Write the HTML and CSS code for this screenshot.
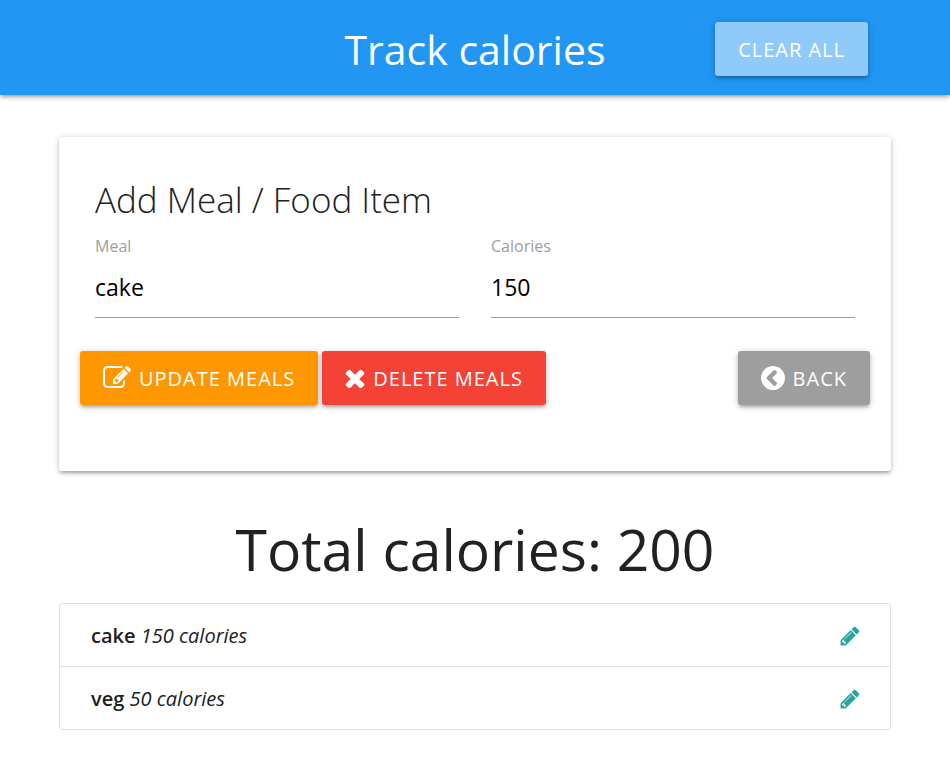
FILE: index.html
```html
<!DOCTYPE html>
<html lang="en">
<head>
<meta charset="utf-8">
<meta name="viewport" content="width=device-width, initial-scale=1">
<title>Track calories</title>
<link rel="stylesheet" href="styles.css">
</head>
<body>
<svg class="sprite" aria-hidden="true">
  <symbol id="pencil" viewBox="0 0 1792 1792"><path d="M491 1536l91-91-235-235-91 91v107h128v128h107zm523-928q0-22-22-22-10 0-17 7l-542 542q-7 7-7 17 0 22 22 22 10 0 17-7l542-542q7-7 7-17zm-54-192l416 416-832 832h-416v-416zm683 96q0 53-37 90l-166 166-416-416 166-165q36-38 90-38 53 0 91 38l235 234q37 39 37 91z"/></symbol>
  <symbol id="edit" viewBox="0 0 1792 1792"><path d="M888 1184l116-116-152-152-116 116v56h96v96h56zm440-720q-16-16-33 1l-350 350q-17 17-1 33t33-1l350-350q17-17 1-33zm80 594v190q0 119-84.5 203.5t-203.5 84.5h-832q-119 0-203.5-84.5t-84.5-203.5v-832q0-119 84.5-203.5t203.5-84.5h832q63 0 117 25 15 7 18 23 3 17-9 29l-49 49q-14 14-32 8-23-6-45-6h-832q-66 0-113 47t-47 113v832q0 66 47 113t113 47h832q66 0 113-47t47-113v-126q0-13 9-22l64-64q15-15 35-7t20 29zm-96-738l288 288-672 672h-288v-288zm444 132l-92 92-288-288 92-92q28-28 68-28t68 28l152 152q28 28 28 68t-28 68z"/></symbol>
  <symbol id="times" viewBox="302 0 1188 1792"><path d="M1490 1322q0 40-28 68l-136 136q-28 28-68 28t-68-28l-294-294-294 294q-28 28-68 28t-68-28l-136-136q-28-28-28-68t28-68l294-294-294-294q-28-28-28-68t28-68l136-136q28-28 68-28t68 28l294 294 294-294q28-28 68-28t68 28l136 136q28 28 28 68t-28 68l-294 294 294 294q28 28 28 68z"/></symbol>
  <symbol id="back" viewBox="128 0 1536 1792"><path d="M1037 1395l102-102q19-19 19-45t-19-45l-307-307 307-307q19-19 19-45t-19-45l-102-102q-19-19-45-19t-45 19l-454 454q-19 19-19 45t19 45l454 454q19 19 45 19t45-19zm627-499q0 209-103 385.5t-279.5 279.5-385.5 103-385.5-103-279.5-279.5-103-385.5 103-385.5 279.5-279.5 385.5-103 385.5 103 279.5 279.5 103 385.5z"/></symbol>
</svg>
<header class="navbar">
  <h1 class="brand">Track calories</h1>
  <div class="nav-action"><button type="button" class="btn btn-clear">Clear All</button></div>
</header>
<main class="container">
  <section class="card">
    <h2 class="card-title">Add Meal / Food Item</h2>
    <form>
      <div class="fields">
        <div class="field">
          <label for="meal">Meal</label>
          <input type="text" id="meal" value="cake">
        </div>
        <div class="field">
          <label for="calories">Calories</label>
          <input type="text" inputmode="numeric" id="calories" value="150">
        </div>
      </div>
      <div class="actions">
        <button type="button" class="btn btn-update"><svg class="icon"><use href="#edit"/></svg>Update Meals</button>
        <button type="button" class="btn btn-delete"><svg class="icon icon-times"><use href="#times"/></svg>Delete Meals</button>
        <button type="button" class="btn btn-back"><svg class="icon icon-back"><use href="#back"/></svg>Back</button>
      </div>
    </form>
  </section>
  <h2 class="total">Total calories: 200</h2>
  <ul class="collection">
    <li class="item">
      <span><strong>cake</strong> <em>150 calories</em></span>
      <a href="#meal" class="edit-link" aria-label="Edit cake"><svg class="icon-pencil"><use href="#pencil"/></svg></a>
    </li>
    <li class="item">
      <span><strong>veg</strong> <em>50 calories</em></span>
      <a href="#meal" class="edit-link" aria-label="Edit veg"><svg class="icon-pencil"><use href="#pencil"/></svg></a>
    </li>
  </ul>
</main>
</body>
</html>
```
FILE: styles.css
```css
* {
  box-sizing: border-box;
}

body {
  margin: 0;
  background: #fff;
  color: #212121;
  font-family: "Segoe UI", "Open Sans", "Noto Sans", sans-serif;
  font-size: 20px;
  line-height: 30px;
}

h1,
h2 {
  margin: 0;
  font-weight: 400;
}

svg {
  display: block;
  fill: currentColor;
}

.sprite {
  display: none;
}

.navbar,
.card,
.btn {
  box-shadow: 0 3px 3px 0 rgba(0, 0, 0, 0.14), 0 4px 2px -3px rgba(0, 0, 0, 0.12), 0 1px 7px 0 rgba(0, 0, 0, 0.2);
}

.navbar {
  display: grid;
  grid-template-columns: 1fr auto 1fr;
  align-items: center;
  padding: 20px 82px 17px;
  background: #2196f3;
  color: #fff;
}

.brand {
  grid-column: 2;
  font-size: 41px;
  line-height: 58px;
}

.nav-action {
  display: flex;
  justify-content: flex-end;
}

.btn {
  display: inline-flex;
  align-items: center;
  gap: 8px;
  height: 54px;
  padding: 2px 23px 0;
  border: 0;
  border-radius: 3px;
  color: #fff;
  font: inherit;
  letter-spacing: 1px;
  text-transform: uppercase;
  white-space: nowrap;
  cursor: pointer;
}

.btn-clear {
  background: #90caf9;
}

.btn-update {
  background: #ff9800;
}

.btn-delete {
  background: #f44336;
}

.btn-back {
  margin-left: auto;
  background: #9e9e9e;
}

.icon {
  width: 28px;
  height: 28px;
  margin-bottom: 3px;
}

.icon-times {
  width: 20px;
}

.icon-back {
  width: 24px;
}

.container {
  margin: 42px 59px 34px;
}

.card {
  padding: 36px 20px 66px;
  border-radius: 3px;
}

.card-title {
  padding: 0 16px;
  font-size: 35px;
  font-weight: 300;
  line-height: 54px;
}

.fields {
  display: grid;
  grid-template-columns: 1fr 1fr;
}

.field {
  padding: 7px 16px 0;
}

.field label {
  display: block;
  color: #9e9e9e;
  font-size: 16px;
  line-height: 24px;
}

.field input {
  display: block;
  width: 100%;
  height: 60px;
  padding: 0 0 2px;
  border: 0;
  border-bottom: 1px solid #9e9e9e;
  outline: 0;
  background: transparent;
  color: #000;
  font: inherit;
  font-size: 23px;
}

.actions {
  display: flex;
  gap: 4px;
  margin: 33px 1px 0;
}

.total {
  margin: 38px 0 14px;
  font-size: 57px;
  line-height: 80px;
  text-align: center;
}

.collection {
  margin: 0;
  padding: 0;
  border: 1px solid #e0e0e0;
  border-radius: 3px;
  list-style: none;
}

.item {
  display: flex;
  justify-content: space-between;
  align-items: center;
  padding: 17px 29px 15px 31px;
}

.item + .item {
  border-top: 1px solid #e0e0e0;
}

.item strong {
  font-weight: 600;
}

.item em {
  font-weight: 400;
}

.edit-link {
  color: #26a69a;
}

.icon-pencil {
  width: 22px;
  height: 22px;
}
```
